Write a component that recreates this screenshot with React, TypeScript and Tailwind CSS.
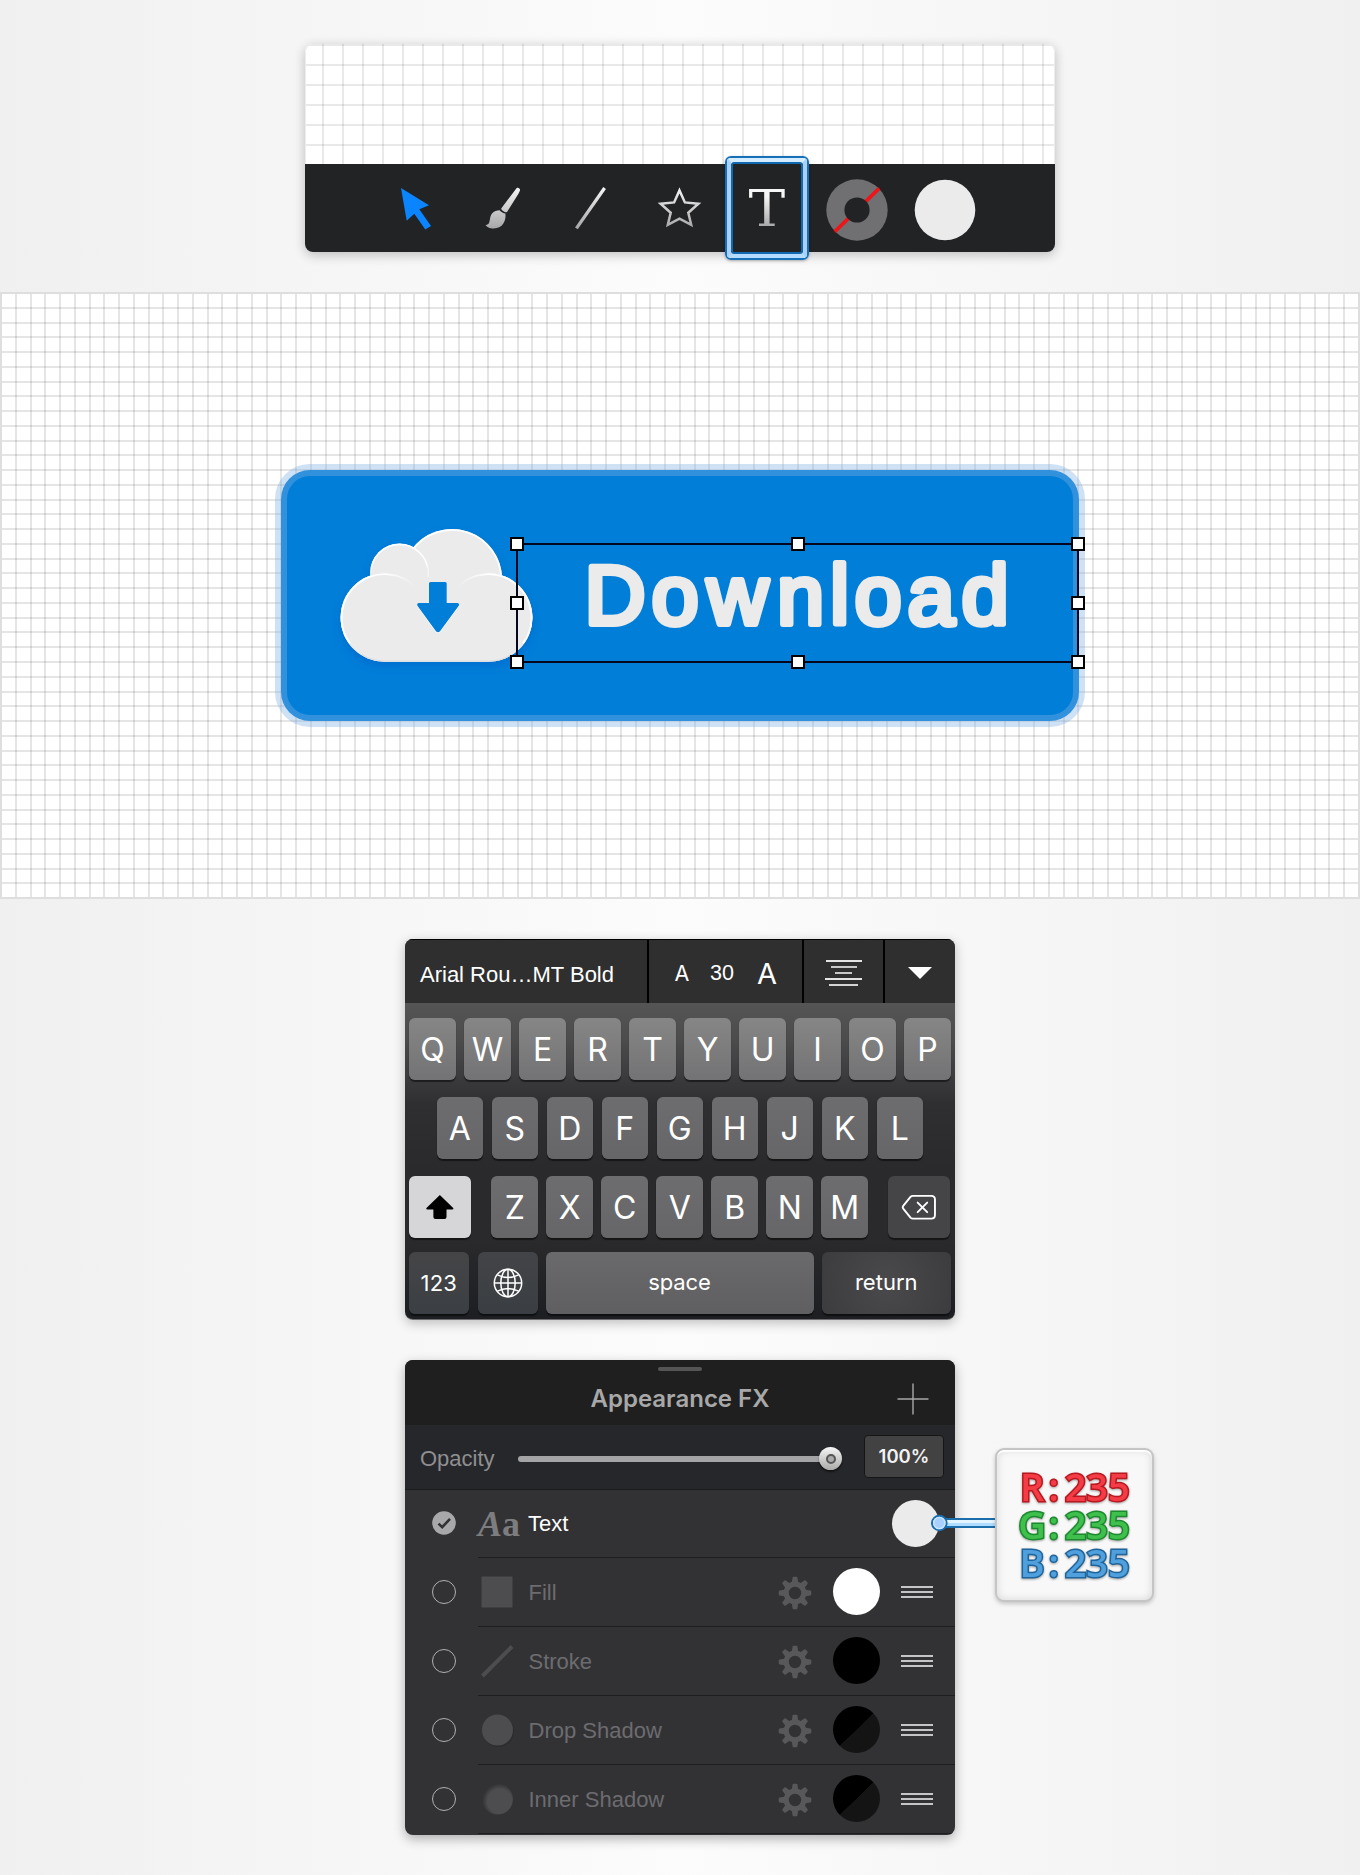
import React from "react";

type SwatchKind = "white" | "black" | "split";

const toolGradient = (id: string) => (
  <defs>
    <linearGradient id={id} x1="0" y1="187" x2="0" y2="229" gradientUnits="userSpaceOnUse">
      <stop offset="0" stopColor="#f6f6f6" />
      <stop offset="1" stopColor="#a6a6a8" />
    </linearGradient>
  </defs>
);

function Tool({ x, children }: { x: number; children: React.ReactNode }) {
  return (
    <div className="relative flex h-[88px] w-[88px] items-center justify-center">
      <svg className="h-[88px] w-[88px]" viewBox={`${x} 164 88 88`}>
        {children}
      </svg>
    </div>
  );
}

function ToolPanel() {
  return (
    <section className="w-[750px] rounded-[8px] shadow-[0_3px_12px_rgba(0,0,0,0.24)]">
      <div className="h-[120px] rounded-t-[8px] bg-white bg-[repeating-linear-gradient(90deg,transparent_0_17px,rgba(0,0,0,0.085)_17px_19px,transparent_19px_20px),repeating-linear-gradient(180deg,rgba(0,0,0,0.085)_0_2px,transparent_2px_20px)] shadow-[inset_1px_0_0_#ededed,inset_-1px_0_0_#ededed]" />
      <div className="flex h-[88px] justify-center rounded-b-[8px] bg-[#222325]">
        <Tool x={372}>
          <path d="M401 188 L429 205.3 L419.3 209.3 L431 226 L425.3 229.5 L414.3 213.7 L406.7 220.7 Z" fill="#0a84ff" />
        </Tool>
        <Tool x={460}>
          {toolGradient("brushFill")}
          <path d="M516.5 188.2 C518 187.2 520.4 188.6 520 190.6 L518.6 193.4 L507.2 211.8 C506.4 213.2 501.2 210.4 501.2 208.4 Z" fill="url(#brushFill)" />
          <path d="M499.6 210.2 C501 211.8 503.6 213.4 505.4 213.6 C506.2 220 503.5 228.5 493.5 228.6 C489.8 228.6 486.6 226.6 485.6 225.2 C491.5 224.6 488.5 218 492 213.6 C494 211.2 497 210.2 499.6 210.2 Z" fill="url(#brushFill)" />
        </Tool>
        <Tool x={548}>
          {toolGradient("lineFill")}
          <path d="M604.6 188 L576.4 228.4" fill="none" stroke="url(#lineFill)" strokeWidth="3.3" />
        </Tool>
        <Tool x={636}>
          {toolGradient("starFill")}
          <path d="M679.5 190.4 L684.9 202.4 L698.4 203.8 L688.3 212.8 L691.2 224.8 L679.5 218.6 L667.8 224.8 L670.7 212.8 L660.6 203.8 L674.1 202.4 Z" fill="none" stroke="url(#starFill)" strokeWidth="2.5" />
        </Tool>
        <div className="relative flex h-[88px] w-[88px] items-center justify-center">
          <span className="scale-x-[1.08] bg-gradient-to-b from-[#f6f6f6] from-30% to-[#a8a8aa] to-80% bg-clip-text pt-px pr-[2px] font-['DejaVu_Serif',serif] text-[51px] leading-[60px] text-transparent">T</span>
          <div className="absolute top-[-8px] left-px h-[104px] w-[84px] rounded-[6px] border-2 border-[#1670b8] shadow-[0_1px_3px_rgba(0,0,0,0.3)]">
            <div className="h-full w-full rounded-[4px] border-4 border-[#a9d0ff] border-t-[#d5edff] border-b-[#b4dcff]">
              <div className="h-full w-full rounded-[3px] border-2 border-[#1268ae]" />
            </div>
          </div>
        </div>
        <Tool x={812}>
          <circle cx="857" cy="210" r="30.7" fill="#707073" />
          <path d="M834.8 231.6 L879.2 188.4" stroke="#ed1518" strokeWidth="3.6" />
          <circle cx="857" cy="210" r="12.6" fill="#222325" />
        </Tool>
        <Tool x={900}>
          <circle cx="945" cy="210" r="30.3" fill="#ebebeb" />
        </Tool>
      </div>
    </section>
  );
}

function Cloud() {
  return (
    <svg className="absolute top-[50px] left-[51px] h-[160px] w-[214px]" viewBox="332 520 214 160">
      <defs>
        <linearGradient id="rim" x1="0" y1="544" x2="0" y2="575" gradientUnits="userSpaceOnUse">
          <stop offset="0" stopColor="#fff" />
          <stop offset="0.6" stopColor="#fff" stopOpacity="0.8" />
          <stop offset="1" stopColor="#fff" stopOpacity="0" />
        </linearGradient>
        <linearGradient id="rimLeft" x1="385" y1="0" x2="416" y2="0" gradientUnits="userSpaceOnUse">
          <stop offset="0" stopColor="#fff" />
          <stop offset="1" stopColor="#fff" stopOpacity="0" />
        </linearGradient>
        <linearGradient id="rimRight" x1="457" y1="0" x2="488" y2="0" gradientUnits="userSpaceOnUse">
          <stop offset="0" stopColor="#fff" stopOpacity="0" />
          <stop offset="1" stopColor="#fff" />
        </linearGradient>
        <filter id="cloudShade" x="-10%" y="-10%" width="120%" height="130%">
          <feDropShadow dx="0" dy="5" stdDeviation="4" floodColor="#0048c0" floodOpacity="0.3" />
        </filter>
      </defs>
      <g filter="url(#cloudShade)" fill="#ebebeb">
        <circle cx="452" cy="579" r="50" />
        <circle cx="399.5" cy="573" r="29.3" />
        <rect x="340.5" y="573.2" width="192" height="88.6" rx="44.3" />
      </g>
      <path d="M412 550.4 A49.2 49.2 0 0 1 501.2 579" fill="none" stroke="#fff" strokeWidth="1.7" />
      <circle cx="399.5" cy="573" r="29.3" fill="#ebebeb" />
      <path d="M370.9 573 A28.6 28.6 0 0 1 428.1 573" fill="none" stroke="url(#rim)" strokeWidth="1.6" />
      <rect x="340.5" y="573.2" width="192" height="88.6" rx="44.3" fill="#ebebeb" />
      <circle cx="440" cy="590" r="26" fill="#ebebeb" />
      <path d="M428.1 577 A28.6 28.6 0 0 0 418 551" fill="none" stroke="#fff" strokeOpacity="0.6" strokeWidth="1.2" />
      <path d="M350 643.4 A43.4 43.4 0 0 1 417 588.4" fill="none" stroke="url(#rimLeft)" strokeWidth="1.8" />
      <path d="M456 588.4 A43.4 43.4 0 0 1 523 643.4" fill="none" stroke="url(#rimRight)" strokeWidth="1.8" />
      <path d="M362 654.6 Q372 661 385 661 H489 Q502 661 511 654.6" fill="none" stroke="#dedee0" strokeWidth="1.2" />
      <path d="M430.5 582 H445.2 Q446.7 582 446.7 583.5 V603 H457.5 Q460 603.6 458.6 606 L440.2 631 Q438 633.6 435.8 631 L417.6 606 Q416.4 603.6 418.6 603 H429 V583.5 Q429 582 430.5 582 Z" fill="#fff" transform="translate(0 1)" />
      <path d="M430.5 582 H445.2 Q446.7 582 446.7 583.5 V603 H457.5 Q460 603.6 458.6 606 L440.2 631 Q438 633.6 435.8 631 L417.6 606 Q416.4 603.6 418.6 603 H429 V583.5 Q429 582 430.5 582 Z" fill="#007ed8" />
    </svg>
  );
}

const handle = "absolute h-[14px] w-[14px] border-2 border-black bg-white";

function Artboard() {
  return (
    <section className="flex h-[607px] w-full justify-center border-2 border-[#dedede] bg-white bg-[repeating-linear-gradient(90deg,rgba(0,0,0,0.1)_0_2px,transparent_2px_14.76px),repeating-linear-gradient(180deg,rgba(0,0,0,0.1)_0_2px,transparent_2px_14.76px)] bg-origin-border pt-[176px]">
      <div className="relative h-[251px] w-[798px] rounded-[29px] bg-[#007ed8]">
        <div className="absolute inset-[-6px] rounded-[35px] border-[12px] border-[rgba(129,175,228,0.38)]" />
        <Cloud />
        <svg className="absolute top-[74px] left-[236px] h-[118px] w-[561px]" viewBox="517 544 561 118">
          <text x="615 675 737.5 800.5 839.5 878 931 985" y="624" textAnchor="middle" fontFamily="'Liberation Sans', Arial, sans-serif" fontSize="84" fill="#ebebeb" stroke="#ebebeb" strokeWidth="6" strokeLinejoin="round">Download</text>
        </svg>
        <div className="absolute top-[73px] left-[235px] h-[120px] w-[563px] border-2 border-[#06061c]">
          <div className={`${handle} top-[-8px] left-[-8px]`} />
          <div className={`${handle} top-[-8px] left-[273px]`} />
          <div className={`${handle} top-[-8px] right-[-8px]`} />
          <div className={`${handle} top-[51px] left-[-8px]`} />
          <div className={`${handle} top-[51px] right-[-8px]`} />
          <div className={`${handle} bottom-[-8px] left-[-8px]`} />
          <div className={`${handle} bottom-[-8px] left-[273px]`} />
          <div className={`${handle} right-[-8px] bottom-[-8px]`} />
        </div>
      </div>
    </section>
  );
}

function Key({ label, top = false }: { label: string; top?: boolean }) {
  return (
    <div
      className={`flex h-[62px] w-[46.5px] shrink-0 items-center justify-center rounded-[6px] pt-px text-[32px] text-white shadow-[0_1.5px_1px_rgba(0,0,0,0.5)] ${
        top ? "bg-linear-to-b from-[#868686] to-[#737375]" : "bg-linear-to-b from-[#6d6d6f] to-[#666669]"
      }`}
    >
      {label}
    </div>
  );
}

function Keyboard() {
  return (
    <section className="mt-10 flex h-[381px] w-[550px] flex-col overflow-hidden rounded-[8px] border-b border-[#6c6c6e] bg-[linear-gradient(180deg,#555_64px,#4c4c4d_100px,#38383b_145px,#2f2f32_165px,#2a2a2c_230px,#2a2a2c_300px,#1d1f22_375px)] font-['Inter',sans-serif] shadow-[0_3px_12px_rgba(0,0,0,0.25)]">
      <div className="flex h-16 shrink-0 border-t border-black bg-[#2f2f2f] text-white">
        <div className="flex w-[244px] items-center border-r-2 border-black pt-[5px] pl-[15px] font-['Liberation_Sans',Arial,sans-serif] text-[22px] whitespace-nowrap">Arial Rou…MT Bold</div>
        <div className="flex w-[155px] items-center border-r-2 border-black pt-1 leading-none">
          <span className="ml-[20px] w-[34px] -translate-x-1 text-center text-[21.5px]">A</span>
          <span className="ml-[2px] w-[34px] text-center font-['Liberation_Sans',Arial,sans-serif] text-[21.5px]">30</span>
          <span className="ml-[11px] w-[34px] text-center text-[29px]">A</span>
        </div>
        <div className="flex w-[81px] flex-col items-center gap-1 border-r-2 border-black pt-[20px]">
          <i className="h-[2px] w-[36px] bg-[#e4e4e4]" />
          <i className="h-[2px] w-[26px] bg-[#c8c8c8]" />
          <i className="h-[2px] w-[17px] bg-[#c8c8c8]" />
          <i className="h-[2px] w-[37px] bg-[#e4e4e4]" />
          <i className="h-[2px] w-[29px] bg-[#d4d4d4]" />
        </div>
        <div className="flex flex-1 justify-center">
          <svg className="mt-[27px] h-3 w-6" viewBox="0 0 24 12"><path d="M0 0 H24 L12 12 Z" fill="#fff" /></svg>
        </div>
      </div>
      <div className="mt-[15px] flex shrink-0 gap-[8.5px] pl-[4.3px]">
        {"QWERTYUIOP".split("").map((k) => <Key key={k} label={k} top />)}
      </div>
      <div className="mt-[17px] flex shrink-0 gap-[8.5px] pl-[31.5px]">
        {"ASDFGHJKL".split("").map((k) => <Key key={k} label={k} />)}
      </div>
      <div className="mt-[17px] flex shrink-0 gap-[8.5px] pl-[4.3px]">
        <div className="mr-[12px] flex h-[62px] w-[61.7px] shrink-0 rounded-[6px] bg-[#d6d6d8] shadow-[0_1.5px_1px_rgba(0,0,0,0.5)]">
          <svg className="h-[62px] w-[62px]" viewBox="409.3 1176 62 62">
            <path d="M440.3 1195 L454 1208.3 Q454 1209.5 452.8 1209.5 H447 V1217 Q447 1219 445 1219 H435.8 Q433.8 1219 433.8 1217 V1209.5 H427.8 Q426.6 1209.5 426.6 1208.3 Z" fill="#000" />
          </svg>
        </div>
        {"ZXCVBNM".split("").map((k) => <Key key={k} label={k} />)}
        <div className="ml-[11.5px] flex h-[62px] w-[61.7px] shrink-0 rounded-[6px] bg-[#454547] shadow-[0_1.5px_1px_rgba(0,0,0,0.5)]">
          <svg className="h-[62px] w-[62px]" viewBox="889 1176 62 62" fill="none" stroke="#fff" strokeWidth="1.9" strokeLinecap="round" strokeLinejoin="round">
            <path d="M914 1195.8 H932.5 Q936.2 1195.8 936.2 1199.5 V1215 Q936.2 1218.7 932.5 1218.7 H914 Q912.6 1218.7 911.6 1217.6 L904.3 1208.6 Q903.2 1207.2 904.3 1205.8 L911.6 1196.9 Q912.6 1195.8 914 1195.8 Z" />
            <path d="M918.8 1202.6 L928.4 1212.2 M928.4 1202.6 L918.8 1212.2" />
          </svg>
        </div>
      </div>
      <div className="mt-[14px] flex shrink-0 gap-[8.5px] pl-[4.3px] text-[22px] leading-none text-white">
        <div className="flex h-[62px] w-[60px] items-center justify-center rounded-[6px] bg-linear-to-b from-[#454547] to-[#3b3f43] shadow-[0_1.5px_1px_rgba(0,0,0,0.5)]"><span className="pr-px tracking-[0.2px]">123</span></div>
        <div className="flex h-[62px] w-[60px] items-center justify-center rounded-[6px] bg-linear-to-b from-[#434447] to-[#3a3e42] shadow-[0_1.5px_1px_rgba(0,0,0,0.5)]">
          <svg className="h-[30px] w-[30px]" viewBox="0 0 30 30" fill="none" stroke="#fff" strokeWidth="1.5">
            <circle cx="15" cy="15" r="13.7" />
            <ellipse cx="15" cy="15" rx="7.2" ry="13.7" />
            <path d="M15 1.3 V28.7 M1.3 15 H28.7 M4.4 6.8 Q15 12 25.6 6.8 M4.4 23.2 Q15 18 25.6 23.2" />
          </svg>
        </div>
        <div className="-ml-[0.8px] flex h-[62px] w-[268px] items-center justify-center rounded-[6px] bg-linear-to-b from-[#6a6a6c] to-[#5f5f62] pb-[3px] tracking-[-0.1px] shadow-[0_1.5px_1px_rgba(0,0,0,0.5)]">space</div>
        <div className="flex h-[62px] w-[128.5px] items-center justify-center rounded-[6px] bg-[radial-gradient(circle_at_50%_50%,#4a4a4c,#3c3c3f)] pb-[3px] shadow-[0_1.5px_1px_rgba(0,0,0,0.5)]">return</div>
      </div>
    </section>
  );
}

function Gear() {
  return (
    <svg className="h-[34px] w-[34px]" viewBox="-17 -17 34 34">
      <g fill="#58585b">
        {[0, 45, 90, 135, 180, 225, 270, 315].map((a) => (
          <path key={a} d="M-3.4 -9 L-2.4 -15.4 Q-2.2 -16.3 -1.3 -16.3 H1.3 Q2.2 -16.3 2.4 -15.4 L3.4 -9 Z" transform={`rotate(${a})`} />
        ))}
      </g>
      <circle r="8.8" fill="none" stroke="#58585b" strokeWidth="5.2" />
    </svg>
  );
}

const swatches: Record<SwatchKind, string> = {
  white: "bg-white",
  black: "bg-black",
  split: "bg-[linear-gradient(136deg,#000_50%,#141414_50.5%)]",
};

function EffectRow({ name, swatch, children }: { name: string; swatch: SwatchKind; children: React.ReactNode }) {
  return (
    <div className="flex h-[69px] pl-[27px]">
      <div className="mt-[22px] mr-[22px] h-[24px] w-[24px] shrink-0 rounded-full border-[1.5px] border-[#b0b0b2]" />
      <div className="flex h-[69px] flex-1 items-center border-b border-[#1d1e20] pl-[2px]">
        <svg className="-mt-px h-[36px] w-[36px]" viewBox="0 0 36 36">{children}</svg>
        <span className="ml-[12.5px] flex-1 font-['Liberation_Sans',Arial,sans-serif] text-[22px] text-[#6c6c6f]">{name}</span>
        <span className="mt-[2px]"><Gear /></span>
        <i className={`mt-[-2px] ml-[21px] h-[47px] w-[47px] rounded-full ${swatches[swatch]}`} />
        <span className="mr-[22px] ml-[21px] flex w-8 flex-col gap-[3px]">
          <i className="h-[2px] bg-[#c5c5c7]" />
          <i className="h-[2px] bg-[#c5c5c7]" />
          <i className="h-[2px] bg-[#c5c5c7]" />
        </span>
      </div>
    </div>
  );
}

function ChannelValue({ channel, tone }: { channel: string; tone: string }) {
  return (
    <div className={`flex h-[38px] leading-[38px] [paint-order:stroke_fill] [filter:drop-shadow(0_1px_1px_rgba(0,0,0,0.35))] ${tone}`}>
      {`${channel}:235`.split("").map((c, i) => (
        <span key={i} className="flex w-[21.7px] justify-center">{c}</span>
      ))}
    </div>
  );
}

function AppearancePanel() {
  return (
    <section className="relative mt-10 h-[475px] w-[550px]">
      <div className="h-full overflow-hidden rounded-[8px] bg-[#323235] shadow-[0_4px_12px_rgba(0,0,0,0.3)]">
        <div className="relative flex h-[65px] items-center justify-center bg-[#1f1f1f]">
          <i className="absolute top-[6.5px] left-[253px] h-[4.5px] w-[44px] rounded-full bg-[#555]" />
          <h2 className="pt-[12px] font-['Inter',sans-serif] text-[24px] leading-none font-semibold text-[#a8a8a8]">Appearance FX</h2>
          <svg className="absolute top-[23px] left-[492px] h-8 w-8" viewBox="0 0 32 32"><path d="M16 0.5 V31.5 M0.5 16 H31.5" stroke="#a8a8a8" strokeWidth="1.4" /></svg>
        </div>
        <div className="flex h-[65px] items-center border-b border-[#1b1c1e] bg-[#26272a] pl-[15px] font-['Liberation_Sans',Arial,sans-serif] text-[22px] text-[#8f8f91]">
          <span className="w-[98px] pt-[2px]">Opacity</span>
          <div className="relative mt-[4px] h-[6px] w-[313px] rounded-full bg-[#a4a4a6]">
            <div className="absolute top-[-9px] right-[-11px] flex h-[23px] w-[23px] items-center justify-center rounded-full bg-linear-to-b from-[#f6f6f6] to-[#aaa] shadow-[0_2px_2px_rgba(0,0,0,0.5)]">
              <i className="h-[10px] w-[10px] rounded-full border-2 border-[#555] bg-[#aaa]" />
            </div>
          </div>
          <div className="mt-[-1px] ml-[33px] flex h-[43px] w-[80px] items-center justify-center rounded-[4px] border border-[#161616] bg-[#424243] font-['Inter',sans-serif] text-[18.5px] font-semibold text-[#f2f2f2]">100%</div>
        </div>
        <div className="flex h-[68px] pl-[27px]">
          <svg className="mt-[21px] mr-[22px] h-6 w-6 shrink-0" viewBox="0 0 24 24">
            <circle cx="12" cy="12" r="11.8" fill="#a8a8aa" />
            <path d="M6.5 12.6 L10.2 16.2 L18 7.8" fill="none" stroke="#323235" strokeWidth="2.6" />
          </svg>
          <div className="flex flex-1 items-center border-b border-[#1d1e20]">
            <span className="w-[50px] font-['Liberation_Serif',serif] text-[36px] leading-none font-bold whitespace-nowrap text-[#7d7d7f]"><em>A</em>a</span>
            <span className="flex-1 font-['Liberation_Sans',Arial,sans-serif] text-[22px] text-white">Text</span>
            <i className="mr-[16px] h-[47px] w-[47px] rounded-full bg-[#ebebeb]" />
          </div>
        </div>
        <EffectRow name="Fill" swatch="white"><rect x="1.5" y="2.5" width="31" height="31" fill="#4d4d4f" /></EffectRow>
        <EffectRow name="Stroke" swatch="black"><path d="M2.5 33 L32 3.5" stroke="#4d4d4f" strokeWidth="4" /></EffectRow>
        <EffectRow name="Drop Shadow" swatch="split">
          <circle cx="18.5" cy="19.5" r="15.5" fill="#2c2c2e" />
          <circle cx="17.5" cy="18" r="15.5" fill="#4d4d4f" />
        </EffectRow>
        <EffectRow name="Inner Shadow" swatch="split">
          <defs>
            <radialGradient id="innerShade" cx="0.57" cy="0.57" r="0.56">
              <stop offset="0.7" stopColor="#4d4d4f" />
              <stop offset="1" stopColor="#323235" />
            </radialGradient>
          </defs>
          <circle cx="17.5" cy="18" r="15.5" fill="url(#innerShade)" />
        </EffectRow>
      </div>
      <svg className="absolute top-[150px] left-[522px] h-[28px] w-[70px]" viewBox="927 1510 70 28">
        <rect x="944" y="1519" width="54" height="8" fill="#b0dcff" stroke="#1b6dac" strokeWidth="2" />
        <rect x="944" y="1520" width="54" height="3" fill="#e2f5ff" />
        <circle cx="939.3" cy="1523" r="7.3" fill="#a9d0ff" stroke="#1b6dac" strokeWidth="2" />
        <circle cx="939.3" cy="1523" r="5.6" fill="none" stroke="#c9e6ff" strokeWidth="1.4" />
      </svg>
      <div className="absolute top-[88px] left-[590px] flex h-[154px] w-[159px] flex-col items-center rounded-[9px] border-2 border-[#c5c5c5] bg-[#f8f8f8] pt-[17px] pl-[2px] font-['Open_Sans',sans-serif] text-[38px] font-semibold shadow-[inset_0_2px_1px_#fff,inset_0_0_8px_rgba(0,0,0,0.14),0_2px_4px_rgba(0,0,0,0.2)]">
        <ChannelValue channel="R" tone="text-[#f43c46] [-webkit-text-stroke:3px_#b8181f]" />
        <ChannelValue channel="G" tone="text-[#3fc04c] [-webkit-text-stroke:3px_#1d8a30]" />
        <ChannelValue channel="B" tone="text-[#4fa0dc] [-webkit-text-stroke:3px_#1f659c]" />
      </div>
    </section>
  );
}

export default function App() {
  return (
    <main className="flex h-[1875px] w-full flex-col items-center overflow-hidden bg-[linear-gradient(90deg,#f0f0f0,#fcfcfc_50%,#f0f0f0)]">
      <div className="flex h-[292px] shrink-0 items-start pt-[44px]">
        <ToolPanel />
      </div>
      <Artboard />
      <Keyboard />
      <AppearancePanel />
    </main>
  );
}
